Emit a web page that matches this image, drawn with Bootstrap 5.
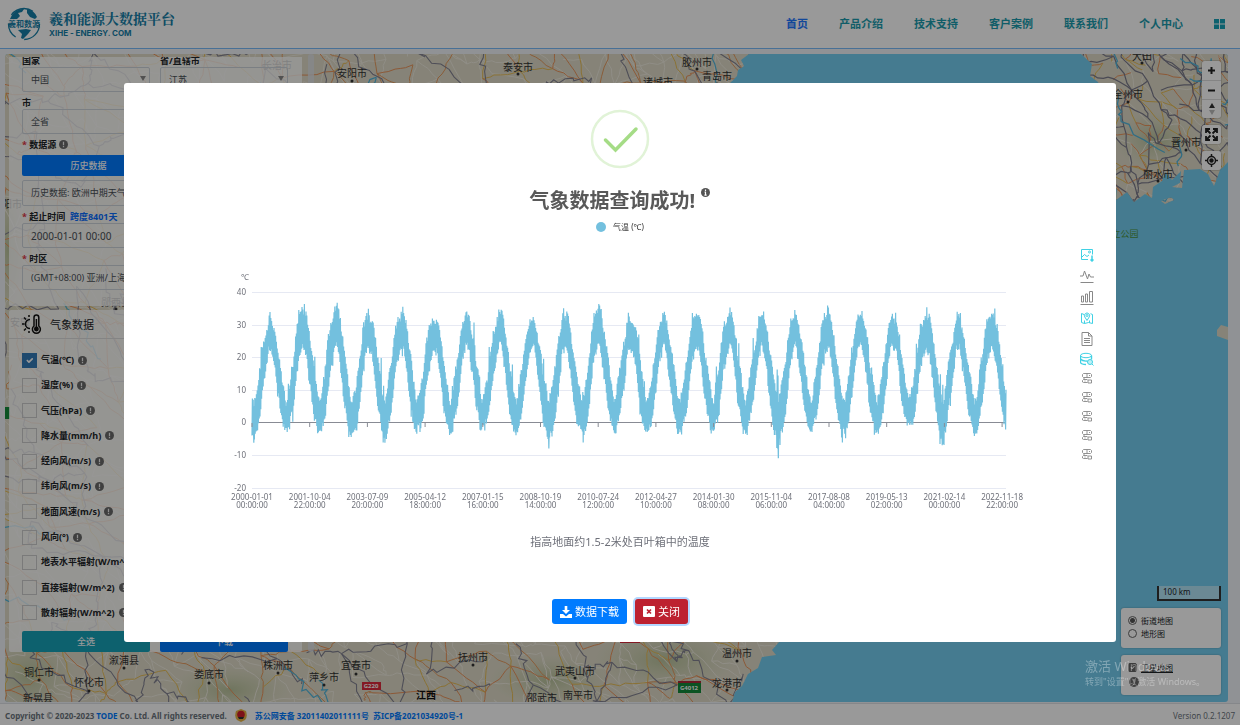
<!DOCTYPE html>
<html lang="zh-CN">
<head>
<meta charset="utf-8">
<meta name="viewport" content="width=device-width, initial-scale=1">
<title>羲和能源大数据平台</title>
<link href="https://cdn.jsdelivr.net/npm/bootstrap@5.3.0/dist/css/bootstrap.min.css" rel="stylesheet">
<style>
:root{--teal:#17a2b8;--blue:#007bff;--ink:#212529}
body{font-family:"Noto Sans","Noto Sans CJK SC",sans-serif;font-size:10px;line-height:13px;background:#f1f3f9;color:var(--ink);height:100vh;overflow:hidden}
a{text-decoration:none}
.site-head{background:#fff;border-bottom:1px solid #78bbfa;height:49px;padding:0 15px 0 7px;flex-wrap:nowrap}
.brand-cn{font:bold 14px/18px "Noto Serif CJK SC","Noto Sans CJK SC",serif;color:#167fa8}
.brand-en{font:bold 8px/12px Inter,sans-serif;color:#167fa8}
.menu{gap:31px}
.menu .nav-link{padding:0;font-size:11px;line-height:16px;font-weight:700;color:#1b9cae}
.menu .nav-link.active{color:#1f78ff}
.map-wrap{margin:5px 12px 0 5px;border-radius:3px;overflow:hidden;background:#74cef0}
.map-art{position:absolute;inset:0;width:100%;height:100%}
.side{position:absolute;left:4px;top:3px;bottom:50px;width:293px;overflow:hidden;z-index:2}
.pane{background:rgba(255,255,255,.8);border-radius:2px;padding:0 14px 0 13px;flex:none}
.pane label.cap,.cap{font-size:9px;line-height:13px;font-weight:700;display:block}
.req::before{content:"* ";color:#dc3545}
.fld{height:25px;font-size:10px;line-height:14px;padding:0 8px;border:1px solid #ced4da;border-radius:2px;background-color:transparent;color:#495057;width:100%;min-width:0}
select.fld{appearance:none;font-size:9px}
.dd{position:relative;display:block}
.dd::after{content:"";position:absolute;right:4px;top:9px;border:3px solid transparent;border-top:5px solid #888;pointer-events:none}
.bt{font-size:9px;line-height:13px;padding:3px 4px;border-radius:2px;font-weight:500;height:21px}
.bt-blue{background:var(--blue);color:#fff}.bt-blue:hover{background:#0069d9;color:#fff}
.bt-teal{background:var(--teal);color:#fff}
.info{display:inline-block;width:9px;height:9px;vertical-align:-1px}
.wx-head{height:29px;border-bottom:1px solid #dcdcdc;margin:0 -14px 0 -13px;padding:0 13px;font-size:11px}
.checks{height:269px;margin-top:13px}
.checks .form-check{height:16px;min-height:0;padding:0;margin:0;white-space:nowrap}
.checks .form-check-input{margin:0 4px 0 0;float:none;width:15px;height:15px;border-radius:0;border:1px solid #ccc;background-color:transparent;flex:none}
.checks .form-check-input:checked{background-color:#337ab7;border-color:#337ab7;background-size:11px}
.checks label{font-weight:700;font-size:9px;line-height:16px;margin-right:4px}
.scroller{position:absolute;left:303px;top:0;bottom:50px;width:6px;background:#dfe2e8;border-radius:3px;opacity:.8}
.map-ctl{position:absolute;right:7px;top:7px;width:19px}
.map-ctl button{display:flex;align-items:center;justify-content:center;width:19px;height:19px;border:0;padding:0;background:#fff}
.map-ctl .grp{border-radius:3px;overflow:hidden;box-shadow:0 0 0 1px rgba(0,0,0,.1);background:#ddd}
.map-ctl .grp button+button{border-top:1px solid #ddd}
.map-foot{position:absolute;right:7px;bottom:7px;width:100px}
.scale-bar{width:64px;height:15px;border:2px solid #333;border-top:0;background:rgba(255,255,255,.45);font-size:8px;line-height:12px;padding-left:4px}
.lay{background:#fff;border-radius:3px;height:40px;padding:6px 7px;box-shadow:0 0 2px rgba(0,0,0,.3);font-size:8px}
.lay .form-check{min-height:0;height:13px;margin:0;padding:0;gap:4px}
.lay .form-check-input{float:none;margin:0;width:9px;height:9px;border:1px solid #666;flex:none}
.lay .form-check-input:checked{background-color:#666}
.lay .form-check-input[type=radio]:checked{background-color:#fff;background-image:radial-gradient(#555 0 2px,transparent 3px)}
.site-foot{height:22px;padding:2px 5px 0;font-size:8px;font-weight:700;color:#6c757d;background:#fff;margin-top:1px;border-top:1px solid #dee2e6}
.site-foot a{color:var(--blue)}
.site-foot .ver{font-weight:400}
.veil{display:block;background:rgba(0,0,0,.4)}
.veil .modal-dialog{max-width:80%;margin:0 auto;min-height:100%}
.veil .modal-content{border:0;border-radius:3px;padding:26px 0 18px}
.ttl{font-size:20px;line-height:28px;font-weight:700;color:#595959;margin-top:18px}
.ttl svg{vertical-align:11px;margin-left:1px}
.legend-row{font-size:8px;line-height:16px;color:#333;margin-top:4px;gap:7px}
.dot{width:10px;height:10px;border-radius:50%;background:#73c0de}
.plot{margin-top:12px;padding-right:6px}
.plot .chart{flex:1 1 0;min-width:0}
.plot text{font-size:8px;fill:#6e7079}
.tools{width:46px}
.tools button{border:0;background:none;padding:0;width:14px;display:flex;justify-content:center;align-items:center;color:#888}
.tools button.hot{color:#3fd1e4}
.tools svg{fill:none;stroke:currentColor;stroke-width:1}
.big{height:16px;margin-bottom:5px}
.sm{height:15px;margin-bottom:4px}
.desc{margin-top:13px;font-size:11px;line-height:20px;color:#6e7079}
.acts{margin-top:47px;gap:8px}
.acts .btn{height:25px;font-size:11px;line-height:15px;padding:4px 8px;border:0;border-radius:3px;color:#fff;display:flex;align-items:center;gap:3px}
.acts .close-b{background:#bd2130;box-shadow:0 0 0 2px #b3d7ff}
.wmark{position:fixed;left:1085px;bottom:36px;z-index:2000;color:rgba(255,255,255,.33);pointer-events:none;font-size:9px;line-height:14px}
.wmark b{font-weight:400;font-size:13px;line-height:18px;display:block}
</style>
</head>
<body class="d-flex flex-column">
<svg width="0" height="0" class="position-absolute">
  <symbol id="i-info" viewBox="0 0 10 10"><circle cx="5" cy="5" r="5" fill="#6a6a6a"/><path d="M5 2v3.700M5 6.700v1.400" stroke="#eee" stroke-width="1.400"/></symbol>
  <symbol id="i-db" viewBox="0 0 12 12"><path d="M2.500 1.500h7l1 1v2l-1 1h-7l-1-1v-2zM6 1.500v4M8 3.500h1M3 5.500v2M6.500 7.500h-4l-1 1v1.500l1 .5h4M3.500 9h1M7 8h3.500v3H7z" stroke-width=".9"/></symbol>
</svg>

<header class="site-head navbar d-flex justify-content-between align-items-center">
  <a href="#" class="d-flex align-items-center">
    <svg width="34" height="36" viewBox="0 0 34 36" class="me-2">
      <circle cx="17" cy="18" r="15.500" fill="none" stroke="#167fa8" stroke-width="1.300" stroke-dasharray="24 9 16 9 24 15"/>
      <path d="M5 9Q10 2 17 3l-2 3-4 1 2 3-3 3H3zM20 3q7 1 10 8l-2 2-5-2-3-4zM11 24l8-1 5 1-3 4-5 5-2-1 1-4z" fill="#167fa8"/>
      <text x="17" y="21" text-anchor="middle" font-size="8" font-weight="700" fill="#167fa8">羲和数源</text>
    </svg>
    <span class="d-flex flex-column"><span class="brand-cn">羲和能源大数据平台</span><span class="brand-en">XIHE - ENERGY. COM</span></span>
  </a>
  <nav class="menu nav align-items-center flex-nowrap">
    <a class="nav-link active" href="#">首页</a><a class="nav-link" href="#">产品介绍</a><a class="nav-link" href="#">技术支持</a><a class="nav-link" href="#">客户案例</a><a class="nav-link" href="#">联系我们</a><a class="nav-link" href="#">个人中心</a>
    <a class="nav-link d-flex" href="#" aria-label="应用"><svg width="11" height="10"><path d="M0 0h5v4.500H0zM6 0h5v4.500H6zM0 5.500h5V10H0zM6 5.500h5V10H6z" fill="#17a2b8"/></svg></a>
  </nav>
</header>

<main class="map-wrap flex-grow-1 position-relative">
  <svg class="map-art" viewBox="5 54 1223 648" preserveAspectRatio="xMidYMid slice">
    <defs>
      <clipPath id="land"><path d="M5 54H749L741 60 744 66 738 70 737 76 730 83V642H779L772 650 776 655 762 657 758 668 748 674 742 686 735 692 732 702H5ZM1081 54 1092 64 1090 76 1098 82 1104 96 1107 190 1117 189 1116 200 1127 192 1134 202 1145 194 1152 198 1153 187 1162 181 1165 172 1172 180 1181 171 1180 183 1172 187 1182 188 1184 170 1200 169 1208 174 1214 186 1220 170 1228 162V54ZM1217 330l4-5 7 2v13l-11-4zM1161 201l10-4 3 3-9 4z"/></clipPath>
      <radialGradient id="hill"><stop offset="0" stop-color="#a9b889" stop-opacity=".7"/><stop offset="1" stop-color="#c5cca5" stop-opacity="0"/></radialGradient>
    </defs>
    <g clip-path="url(#land)">
      <path d="M5 54h1223v648H5z" fill="#dfdbc8"/>
      <g fill="url(#hill)"><ellipse cx="30" cy="675" rx="45" ry="40"/><ellipse cx="550" cy="680" rx="60" ry="25"/><ellipse cx="665" cy="660" rx="70" ry="30"/><ellipse cx="1155" cy="140" rx="40" ry="28"/><ellipse cx="230" cy="690" rx="60" ry="25"/><ellipse cx="8" cy="250" rx="18" ry="70"/></g>
      <g id="roads" fill="none"></g>
    </g>
    <g fill="#333" font-size="10" text-anchor="middle">
      <g id="towns"></g>
      <text x="426" y="699" font-weight="700" fill="#111">江西</text>
      <text x="1125" y="237" font-size="9" fill="#4d9440">立公园</text>
    </g>
    <g font-size="6" font-weight="700" fill="#fff" text-anchor="middle">
      <rect x="362" y="682" width="19" height="8" fill="#dc2b3c"/><text x="371" y="688">G220</text>
      <rect x="620" y="634" width="20" height="9" fill="#dc2b3c"/>
      <rect x="678" y="682" width="23" height="11" fill="#138a3a"/><rect x="678" y="681" width="23" height="2" fill="#b02a37"/><text x="689" y="690">G4012</text>
      <rect x="5" y="407" width="5" height="12" fill="#138a3a"/>
    </g>
  </svg>
  <div class="scroller"></div>

  <aside class="side d-flex flex-column justify-content-end">
    <form class="pane pb-3 mb-1">
      <div class="row g-0" style="column-gap:10px">
        <div class="col"><label class="cap" for="c1">国家</label><span class="dd"><select id="c1" class="fld"><option>中国</option></select></span></div>
        <div class="col"><label class="cap" for="c2">省/直辖市</label><span class="dd"><select id="c2" class="fld"><option>江苏</option></select></span></div>
      </div>
      <label class="cap mt-1" for="c3">市</label><select id="c3" class="fld d-block"><option>全省</option></select>
      <div class="cap mt-1 mb-1 req">数据源 <svg class="info"><use href="#i-info"/></svg></div>
      <div class="d-flex"><button type="button" class="btn bt bt-blue w-50">历史数据</button><button type="button" class="btn bt w-50">预报数据</button></div>
      <select class="fld d-block mt-1" style="height:26px" aria-label="数据"><option>历史数据: 欧洲中期天气预报中心</option></select>
      <label class="cap mt-1 req" for="c4">起止时间 &nbsp;<a href="#">跨度8401天</a></label>
      <div class="d-flex gap-2"><input id="c4" class="fld" value="2000-01-01 00:00"><input class="fld" value="2022-12-31 23:00" aria-label="止"></div>
      <label class="cap mt-1 req" for="c5">时区</label><select id="c5" class="fld d-block"><option>(GMT+08:00) 亚洲/上海</option></select>
    </form>
    <form class="pane">
      <div class="wx-head d-flex align-items-center gap-2"><svg width="20" height="20" viewBox="0 0 20 20" fill="none" stroke="#111" stroke-width="1.500"><path d="M8 5.500a4.500 4.500 0 0 0 0 9M2 3.500l2 2M7 1v2M0 10h2.500M2 16.500l2-2M7 17v2"/><path d="M12 12V3.500a2.400 2.400 0 0 1 4.800 0V12a4 4 0 1 1-4.800 0z"/><circle cx="14.400" cy="15" r="1.700" fill="#111"/><path d="M14.400 5v9"/></svg><span>气象数据</span></div>
      <div class="checks d-flex flex-column justify-content-between" id="checks"></div>
      <div class="d-flex" style="gap:10px;margin-top:10px"><button type="button" class="btn bt bt-teal flex-fill w-50">全选</button><button type="button" class="btn bt bt-blue flex-fill w-50">下载</button></div>
    </form>
  </aside>

  <div class="map-ctl d-flex flex-column" style="gap:7px">
    <div class="grp d-flex flex-column">
      <button aria-label="放大"><svg width="9" height="9"><path d="M4.500 1v7M1 4.500h7" stroke="#222" stroke-width="2"/></svg></button>
      <button aria-label="缩小"><svg width="9" height="9"><path d="M1 4.500h7" stroke="#222" stroke-width="2"/></svg></button>
      <button aria-label="指北"><svg width="8" height="12"><path d="M4 0l3 5H1z" fill="#333"/><path d="M4 12l3-5H1z" fill="#bbb"/></svg></button>
    </div>
    <div class="grp"><button aria-label="全屏"><svg width="13" height="13" fill="none" stroke="#222" stroke-width="1.800"><path d="M1 5V1h4M1 1l4.500 4.500M8 1h4v4M12 1L7.500 5.500M1 8v4h4M1 12l4.500-4.500M8 12h4V8M12 12L7.500 7.500"/></svg></button></div>
    <div class="grp"><button aria-label="定位"><svg width="13" height="13" fill="none" stroke="#222" stroke-width="1.500"><circle cx="6.500" cy="6.500" r="4"/><circle cx="6.500" cy="6.500" r="1.500" fill="#222"/><path d="M6.500 0v3M6.500 10v3M0 6.500h3M10 6.500h3"/></svg></button></div>
  </div>

  <div class="map-foot d-flex flex-column align-items-stretch" style="gap:7px">
    <div class="scale-bar align-self-end">100 km</div>
    <div class="lay">
      <div class="form-check d-flex align-items-center"><input class="form-check-input" type="radio" name="bm" id="b1" checked><label for="b1">街道地图</label></div>
      <div class="form-check d-flex align-items-center"><input class="form-check-input" type="radio" name="bm" id="b2"><label for="b2">地形图</label></div>
    </div>
    <div class="lay">
      <div class="form-check d-flex align-items-center"><input class="form-check-input" type="checkbox" id="b3" checked><label for="b3" class="text-decoration-underline">卫星地图</label></div>
      <svg width="10" height="10" style="margin-left:1px"><use href="#i-info"/></svg>
    </div>
  </div>
</main>

<footer class="site-foot d-flex align-items-center justify-content-between">
  <div class="d-flex align-items-center"><span>Copyright © 2020-2023 <a href="#">TODE</a> Co. Ltd. All rights reserved.</span>
    <svg width="12" height="13" viewBox="0 0 12 13" class="ms-2 me-2"><path d="M6 0l5 2q2 6-1 9L6 13 2 11Q-1 8 1 2z" fill="#e8b545"/><circle cx="6" cy="5.500" r="3.800" fill="#d01f2a"/><path d="M3 8h6l-1 2H4z" fill="#333"/></svg>
    <a href="#">苏公网安备 32011402011111号</a><a href="#" class="ms-1">苏ICP备2021034920号-1</a></div>
  <span class="ver">Version 0.2.1207</span>
</footer>

<div class="modal veil" role="dialog" aria-modal="true" aria-labelledby="ttl">
  <div class="modal-dialog modal-dialog-centered">
    <div class="modal-content align-items-center">
      <svg width="60" height="60" viewBox="0 0 60 60" fill="none"><circle cx="30" cy="30" r="28" stroke="#e1f3d7" stroke-width="2.500"/><path d="M15.500 31l10 10L46 20" stroke="#a5dc86" stroke-width="3.500" stroke-linecap="round"/></svg>
      <div class="ttl" id="ttl">气象数据查询成功! <svg width="9" height="9" viewBox="0 0 10 10"><circle cx="5" cy="5" r="5" fill="#555"/><path d="M5 1.700v1.500M5 4.300v3.800M4 4.500h1.500M3.800 8h2.500" stroke="#fff" stroke-width="1.300"/></svg></div>
      <div class="legend-row d-flex align-items-center"><span class="dot"></span><span>气温 (℃)</span></div>
      <div class="plot d-flex w-100">
        <div class="chart"><svg id="chart" class="w-100 d-block" viewBox="124 248 940 272" role="img" aria-label="气温"></svg></div>
        <div class="tools d-flex flex-column align-items-center">
          <button class="hot big" aria-label="下载图片"><svg width="14" height="14"><path d="M8 11.500H1.500v-10h11v5M1.500 9.500l3-3 2.500 2 2-1.500"/><circle cx="9.500" cy="4" r="1"/><path d="M12 7.500v5M10.500 11.500l1.500 1.500 1.500-1.500" stroke-width="1.500"/></svg></button>
          <button class="big" aria-label="折线图"><svg width="14" height="16"><path d="M0 8h3l1.500-5 3 8L9 6l1.500 3H14M.5 14.500h13"/></svg></button>
          <button class="big" aria-label="柱状图"><svg width="14" height="15"><path d="M1.500 6h2v6h-2zM5.500 4h2v8h-2zM9.500 1.500h3V12h-3zM.5 14.500h13"/></svg></button>
          <button class="hot big" aria-label="地图"><svg width="14" height="14"><path d="M4 3.500L1.500 2.500v9l3 1 4-1 4 1v-9l-2-.8M4.500 9.500v3M9.500 9.500v2.500M7 9.500L4.800 6a2.600 2.600 0 1 1 4.400 0z"/><circle cx="7" cy="4.500" r="1"/></svg></button>
          <button class="big" style="margin-bottom:4px" aria-label="数据视图"><svg width="12" height="14"><path d="M1 .5h6.500l3.500 3.500v9.500H1zM7.500.5V4H11M3 6.500h6M3 8.500h6M3 10.500h6"/></svg></button>
          <button class="hot big" style="margin-bottom:3px" aria-label="数据库"><svg width="14" height="14"><ellipse cx="6" cy="3.500" rx="5.500" ry="2.200"/><path d="M.5 3.500v7q1 2 5.500 2M11.500 3.500v4M.5 7q2 2.500 7 2" stroke-width="1.400"/><circle cx="10" cy="10" r="2.500" fill="#bff1f7"/><path d="M12 12l1.500 1.500"/></svg></button>
          <button class="sm" aria-label="数据1"><svg width="12" height="12"><use href="#i-db"/></svg></button>
          <button class="sm" aria-label="数据2"><svg width="12" height="12"><use href="#i-db"/></svg></button>
          <button class="sm" aria-label="数据3"><svg width="12" height="12"><use href="#i-db"/></svg></button>
          <button class="sm" aria-label="数据4"><svg width="12" height="12"><use href="#i-db"/></svg></button>
          <button class="sm" aria-label="数据5"><svg width="12" height="12"><use href="#i-db"/></svg></button>
        </div>
      </div>
      <div class="desc">指高地面约1.5-2米处百叶箱中的温度</div>
      <div class="acts d-flex">
        <button class="btn bt-blue"><svg width="12" height="12" viewBox="0 0 12 12" fill="#fff"><path d="M4.700 0h2.600v4H10L6 8 2 4h2.700zM0 8h3l3 2.400L9 8h3v4H0z"/></svg>数据下载</button>
        <button class="btn close-b"><svg width="12" height="11"><rect width="12" height="11" rx="1" fill="#fff"/><path d="M4 3.500l4 4M8 3.500l-4 4" stroke="#bd2130" stroke-width="1.700"/></svg>关闭</button>
      </div>
    </div>
  </div>
</div>
<div class="wmark"><b>激活 Windows</b>转到"设置"以激活 Windows。</div>

<script src="https://cdn.jsdelivr.net/npm/bootstrap@5.3.0/dist/js/bootstrap.bundle.min.js"></script>
<script>
// Seeded generator keeps the drawing identical on each load
function rng(s){return function(){s=(s*1664525+1013904223)%4294967296;return s/4294967296}}

// Element check boxes
document.getElementById('checks').innerHTML=['气温(℃)','湿度(%)','气压(hPa)','降水量(mm/h)','经向风(m/s)','纬向风(m/s)','地面风速(m/s)','风向(°)','地表水平辐射(W/m^2)','直接辐射(W/m^2)','散射辐射(W/m^2)'].map(function(t,i){
  return '<div class="form-check d-flex align-items-center"><input class="form-check-input" type="checkbox" id="e'+i+'"'+(i?'':' checked')+'><label for="e'+i+'">'+t+'</label><svg class="info"><use href="#i-info"/></svg></div>'}).join('');

// City labels
document.getElementById('towns').innerHTML=[['安阳市',352,77,81],['泰安市',518,71,74],['胶州市',697,66,69],['青岛市',717,80,84],['诸城市',658,86,0],['铜仁市',39,676,680],['新晃县',38,702,0],['怀化市',89,686,691],['溆浦县',124,664,668],['娄底市',209,678,683],['株洲市',278,669,673],['萍乡市',324,681,685],['宜春市',356,669,674],['抚州市',473,661,665],['武夷山市',575,675,678],['邵武市',542,702,0],['南平市',578,699,0],['温州市',737,657,661],['龙港市',727,687,690],['大田',1142,60,63],['全州市',1128,98,102],['晋州市',1186,146,150],['丽水市',1158,178,181],['阳市',12,208,0],['长治市',277,69,0],['安康',20,326,0],['郧西县',116,306,309]].map(function(c){
  return '<text x="'+c[1]+'" y="'+c[2]+'">'+c[0]+'</text>'+(c[3]?'<circle cx="'+c[1]+'" cy="'+c[3]+'" r="1.500"/>':'')}).join('');

// Road and boundary network
(function(){
  var out='';
  function net(seed,x0,y0,x1,y1,step,cols,w,keep,rough){
    var r=rng(seed),n=[],i,j;
    for(i=0;x0+i*step<=x1+step;i++){n[i]=[];for(j=0;y0+j*step<=y1+step;j++)n[i][j]=[x0+i*step+(r()-.5)*step*.9,y0+j*step+(r()-.5)*step*.9]}
    function seg(a,b){
      if(r()>keep)return;
      var k=Math.max(3,Math.round(step/5)),d='M'+a[0].toFixed(1)+' '+a[1].toFixed(1);
      for(var t=1;t<=k;t++){var q=t<k?rough:0;d+='L'+(a[0]+(b[0]-a[0])*t/k+(r()-.5)*q).toFixed(1)+' '+(a[1]+(b[1]-a[1])*t/k+(r()-.5)*q).toFixed(1)}
      out+='<path d="'+d+'" stroke="'+cols[Math.floor(r()*cols.length)]+'" stroke-width="'+w+'"/>';
    }
    for(i=0;i<n.length-1;i++)for(j=0;j<n[i].length-1;j++){seg(n[i][j],n[i+1][j]);seg(n[i][j],n[i][j+1]);seg(n[i][j],n[i+1][j+1])}
  }
  net(5,0,40,760,710,20,['#efebdf'],1,.5,3);
  net(2,0,40,760,710,32,['#ea945c','#e59a5e','#e6bd58'],1,.6,3);
  net(7,0,40,760,710,44,['#838291'],1.1,.36,7);
  net(9,0,40,760,710,60,['#52b6dc'],1.2,.08,8);
  net(3,1070,45,1235,205,15,['#ea945c','#e6bd58','#efebdf'],1,.55,3);
  net(4,1070,45,1235,205,19,['#7b7a8b'],1.2,.5,4);
  net(8,1070,45,1235,205,30,['#52b6dc'],1.3,.12,6);
  document.getElementById('roads').innerHTML=out;
})();

// Temperature chart
(function(){
  var Y=function(v){return 423.3-v*3.26},L=252,R=1006,yr=(R-L)/23,s='',i;
  for(i=-20;i<=40;i+=10)s+='<path d="M'+L+' '+Math.round(Y(i))+'.5H'+R+'" stroke="'+(i?'#e6e9f3':'#888b94')+'"/><text x="246" y="'+(Math.round(Y(i))+3)+'" text-anchor="end">'+i+'</text>';
  s+='<text x="249" y="281" text-anchor="end">℃</text>';
  var top=[34,36.8,37.6,35,36,35,35,35.6,34,35.6,36.8,35,34.7,36.3,35.6,34.6,35.6,36.6,35,34.3,35.8,34,36.6];
  var low=[-6.3,-3,-4,-5.5,-6.3,-4,-4.6,-3.6,-5,-8,-6.3,-5,-4.3,-4.7,-4,-4.6,-11,-3,-6.2,-5,-1,-7,-5,-2.5];
  var r=rng(21),d='',n=0,g=0;
  for(var x=L;x<=R;x+=.4){
    var t=(x-L)/yr,y=Math.min(22,Math.floor(t)),c=(1-Math.cos(2*Math.PI*(t-.055)))/2,w=Math.min(23,Math.round(t-.05));
    var hi=8+(top[y]-9.5)*Math.pow(c,.75),lo=low[w]*.45+(23-low[w]*.45)*Math.pow(c,1.25);
    var spike=r();
    if(n%6===0)g=(r()-.5)*3;
    if(n++%2){var up=hi+g-r()*2.5;if(spike>.95)up+=(c<.7?7:3)*r();if(c>.94&&spike>.9)up=top[y]-r();up=Math.min(up,top[y]);d+='L'+x.toFixed(1)+' '+Y(up).toFixed(1)}
    else{var dn=lo+g+r()*2-1;if(spike>.93)dn-=3*r();if(c<.05&&spike>.6)dn=low[w]*(.55+.45*r());dn=Math.max(dn,low[w]);d+=(d?'L':'M')+x.toFixed(1)+' '+Y(dn).toFixed(1)}
  }
  [0,4,9,16,21].forEach(function(k){var x=L+(k+.055)*yr;d+='M'+(x-.7)+' '+Y(2)+'L'+x+' '+Y(low[k])+'L'+(x+.7)+' '+Y(3)});
  s+='<path d="'+d+'" fill="none" stroke="#73c0de" stroke-width="1.200" stroke-linejoin="bevel"/>';
  [['2000-01-01','00'],['2001-10-04','22'],['2003-07-09','20'],['2005-04-12','18'],['2007-01-15','16'],['2008-10-19','14'],['2010-07-24','12'],['2012-04-27','10'],['2014-01-30','08'],['2015-11-04','06'],['2017-08-08','04'],['2019-05-13','02'],['2021-02-14','00'],['2022-11-18','22']].forEach(function(a,k){
    var x=(L+k*57.7).toFixed(1);
    s+='<path d="M'+x+' 424v4" stroke="#888b94"/><text text-anchor="middle"><tspan x="'+x+'" y="501">'+a[0]+'</tspan><tspan x="'+x+'" y="509">'+a[1]+':00:00</tspan></text>'});
  document.getElementById('chart').innerHTML=s;
})();
</script>
</body>
</html>
